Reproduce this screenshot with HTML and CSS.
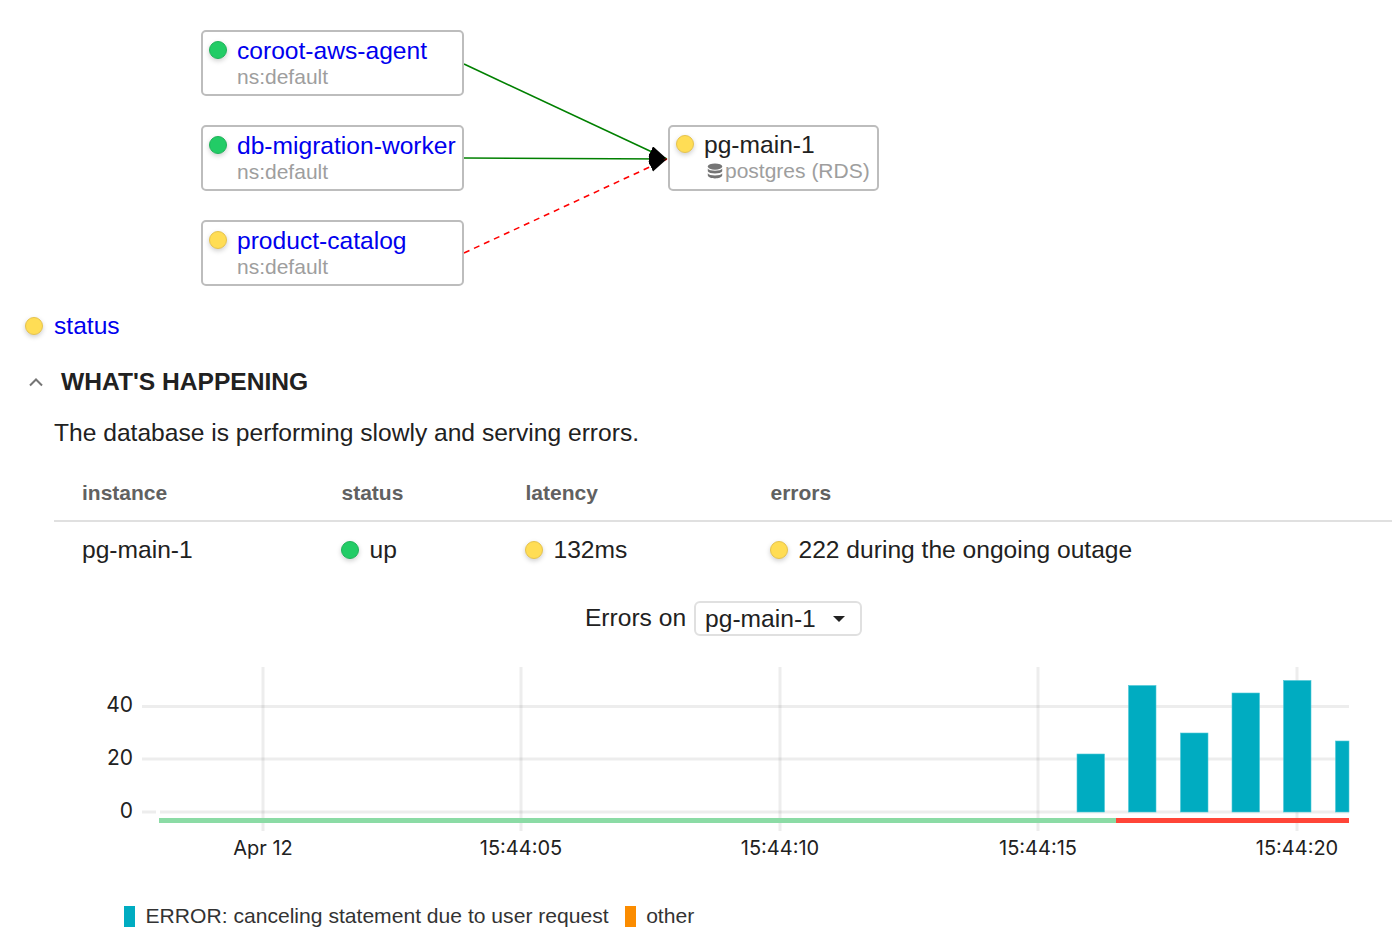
FILE: index.html
```html
<!DOCTYPE html>
<html lang="en">
<head>
<meta charset="utf-8">
<title>pg-main-1</title>
<link rel="stylesheet" href="styles.css">
</head>
<body>
<main class="page">
  <section class="diagram">
    <svg class="links" width="1000" height="300" viewBox="0 0 1000 300">
      <defs>
        <marker id="arrow" markerUnits="userSpaceOnUse" markerWidth="20" markerHeight="12" refX="18" refY="5.500" orient="auto">
          <path d="M0 0L18 5.500L0 11Z" fill="#000"/>
        </marker>
      </defs>
      <path class="link ok" d="M464 64L667 159" marker-end="url(#arrow)"/>
      <path class="link ok" d="M464 158L667 159" marker-end="url(#arrow)"/>
      <path class="link bad" d="M464 253L667 159" marker-end="url(#arrow)"/>
    </svg>
    <div class="clients">
      <div class="node"><span class="dot green"></span><div><a class="title" href="#">coroot-aws-agent</a><div class="sub">ns:default</div></div></div>
      <div class="node"><span class="dot green"></span><div><a class="title" href="#">db-migration-worker</a><div class="sub">ns:default</div></div></div>
      <div class="node"><span class="dot yellow"></span><div><a class="title" href="#">product-catalog</a><div class="sub">ns:default</div></div></div>
    </div>
    <div class="node target"><span class="dot yellow"></span><div><span class="title dark">pg-main-1</span><div class="sub sub-db"><svg class="db" width="16" height="16" viewBox="0 0 16 16"><ellipse cx="8" cy="3.6" rx="7.2" ry="3.2"/><path d="M.8 5.6C2 8.6 14 8.6 15.2 5.6V8.2C14 11.2 2 11.2.8 8.2Z"/><path d="M.8 10.2C2 13.2 14 13.2 15.2 10.2V12.6C14 16.4 2 16.4.8 12.6Z"/></svg>postgres (RDS)</div></div></div>
  </section>

  <div class="status-row"><span class="dot yellow"></span><a class="status-link" href="#">status</a></div>

  <h2 class="heading"><svg class="chev" width="16" height="10" viewBox="0 0 16 10"><path d="M2 8.5L8 2.5L14 8.5"/></svg>WHAT'S HAPPENING</h2>
  <p class="summary">The database is performing slowly and serving errors.</p>

  <table class="instances">
    <thead>
      <tr><th class="c1">instance</th><th class="c2">status</th><th class="c3">latency</th><th>errors</th></tr>
    </thead>
    <tbody>
      <tr>
        <td>pg-main-1</td>
        <td><span class="dot green"></span>up</td>
        <td><span class="dot yellow"></span>132ms</td>
        <td><span class="dot yellow"></span>222 during the ongoing outage</td>
      </tr>
    </tbody>
  </table>

  <div class="chart-title">Errors on <span class="select">pg-main-1<span class="caret"></span></span></div>

  <svg class="chart" width="1392" height="214" viewBox="0 0 1392 214">
    <g class="grid">
      <path d="M263 0V164M521 0V164M780 0V164M1038 0V164M1297 0V164"/>
      <path d="M142 39.500H1349M142 92H1349M142 145H156M160 145H1349"/>
    </g>
    <g class="bars">
      <rect x="1077" y="87" width="27.500" height="58"/>
      <rect x="1128.500" y="18.500" width="27.500" height="126.500"/>
      <rect x="1180.500" y="66" width="27.500" height="79"/>
      <rect x="1232" y="26" width="27.500" height="119"/>
      <rect x="1283.500" y="13.500" width="27.500" height="131.500"/>
      <rect x="1335.500" y="74" width="13.500" height="71"/>
    </g>
    <rect class="ok-strip" x="159" y="151" width="957" height="5"/>
    <rect class="bad-strip" x="1116" y="151" width="233" height="5"/>
    <g class="y-labels">
      <text x="133" y="45">40</text>
      <text x="133" y="98">20</text>
      <text x="133" y="151">0</text>
    </g>
    <g class="x-labels">
      <text x="263" y="188">Apr 12</text>
      <text x="521" y="188">15:44:05</text>
      <text x="780" y="188">15:44:10</text>
      <text x="1038" y="188">15:44:15</text>
      <text x="1297" y="188">15:44:20</text>
    </g>
  </svg>

  <div class="legend">
    <span class="legend-item"><span class="swatch teal"></span>ERROR: canceling statement due to user request</span>
    <span class="legend-item"><span class="swatch orange"></span>other</span>
  </div>
</main>
</body>
</html>
```
FILE: styles.css
```css
* { box-sizing: border-box; }
html, body { margin: 0; padding: 0; background: #fff; }
body {
  font-family: "Liberation Sans", Arial, sans-serif;
  font-size: 24.600px;
  color: #212121;
  overflow: hidden;
}
a { color: #0000ee; text-decoration: none; }
.page { width: 1392px; height: 934px; overflow: hidden; }

.diagram {
  position: relative;
  height: 300px;
  display: flex;
  align-items: flex-start;
  padding-left: 201px;
  gap: 204px;
}
.links { position: absolute; left: 0; top: 0; }
.link { fill: none; stroke-width: 1.6; }
.ok { stroke: #008000; }
.bad { stroke: #ff0000; stroke-dasharray: 6 5; }
.clients {
  position: relative;
  display: flex;
  flex-direction: column;
  gap: 29px;
  margin-top: 30px;
}
.node {
  position: relative;
  display: flex;
  align-items: flex-start;
  width: 263px;
  height: 66px;
  padding: 5px 6px;
  background: #fff;
  border: 2px solid #bdbdbd;
  border-radius: 5px;
  line-height: 28px;
  white-space: nowrap;
}
.target { width: 211px; height: 66px; margin-top: 125px; padding-right: 0; padding-top: 4px; }
.title { display: block; font-size: 24.600px; line-height: 28px; }
.dark { color: #212121; }
.sub { font-size: 21px; line-height: 24px; color: #9e9e9e; margin-top: 0; }
.sub-db { display: flex; align-items: center; gap: 2px; padding-left: 3px; margin-top: 0; }
.db { fill: #757575; }

.dot {
  display: inline-block;
  flex: none;
  width: 18px;
  height: 18px;
  margin-right: 10.500px;
  margin-left: -.5px;
  border-radius: 50%;
  border: 1px solid;
  box-shadow: 0 2px 5px rgba(0, 0, 0, .2);
  vertical-align: -1px;
}
.node .dot { margin-top: 4px; margin-right: 10px; margin-left: 0; }
.status-row .dot { margin-left: 0; margin-right: 11px; }
.green { background: #22cc66; border-color: #1fb35a; }
.yellow { background: #ffdd55; border-color: #e6c34d; }

.status-row { display: flex; align-items: center; height: 28px; margin-top: 12px; padding-left: 25px; }
.status-link { line-height: 28px; }
.heading {
  display: flex;
  align-items: center;
  margin: 28px 0 0;
  padding-left: 28px;
  font-size: 24.600px;
  line-height: 28px;
  font-weight: 700;
  color: #212121;
}
.chev { fill: none; stroke: #757575; stroke-width: 2; margin-right: 17px; }
.summary { margin: 23px 0 0; padding-left: 54px; line-height: 28px; }

.instances {
  width: 1338px;
  margin: 31px 0 0 54px;
  border-collapse: collapse;
  table-layout: fixed;
}
.instances th {
  height: 43px;
  padding: 0 0 13px 28px;
  font-size: 21px;
  line-height: 24px;
  text-align: left;
  color: #616161;
  border-bottom: 2px solid #e0e0e0;
}
.instances td { height: 56px; padding: 0 0 0 28px; line-height: 28px; }
.c1 { width: 259.500px; }
.c2 { width: 184px; }
.c3 { width: 245px; }

.chart-title {
  display: flex;
  justify-content: center;
  align-items: center;
  gap: 8px;
  margin-top: 23px;
  height: 36px;
  padding-left: 55px;
  line-height: 28px;
}
.select {
  display: flex;
  align-items: center;
  width: 168px;
  height: 35px;
  margin-top: 1px;
  padding-left: 9px;
  border: 2px solid #e0e0e0;
  border-radius: 6px;
  white-space: nowrap;
}
.caret {
  width: 0;
  height: 0;
  margin-left: 17px;
  border-left: 6.500px solid transparent;
  border-right: 6.500px solid transparent;
  border-top: 6.500px solid #212121;
}

.chart { display: block; margin-top: 31px; }
.grid path { fill: none; stroke: #000; stroke-opacity: .07; stroke-width: 3; }
.bars rect { fill: #00acc1; stroke: #4dc8d8; stroke-width: .6; }
.ok-strip { fill: #8bdba5; }
.bad-strip { fill: #ff4538; }
.y-labels text, .x-labels text { font-family: "Inter", "Liberation Sans", sans-serif; fill: #212121; }
.y-labels text { font-size: 21px; text-anchor: end; }
.x-labels text { font-size: 20px; text-anchor: middle; }

.legend { display: flex; gap: 16px; margin-top: 23px; padding-left: 124px; font-size: 21.100px; line-height: 24px; color: #333; }
.legend-item { display: flex; align-items: center; white-space: nowrap; }
.swatch { width: 11px; height: 21px; margin-right: 10.500px; }
.teal { background: #00acc1; }
.orange { background: #fb8c00; }
```
